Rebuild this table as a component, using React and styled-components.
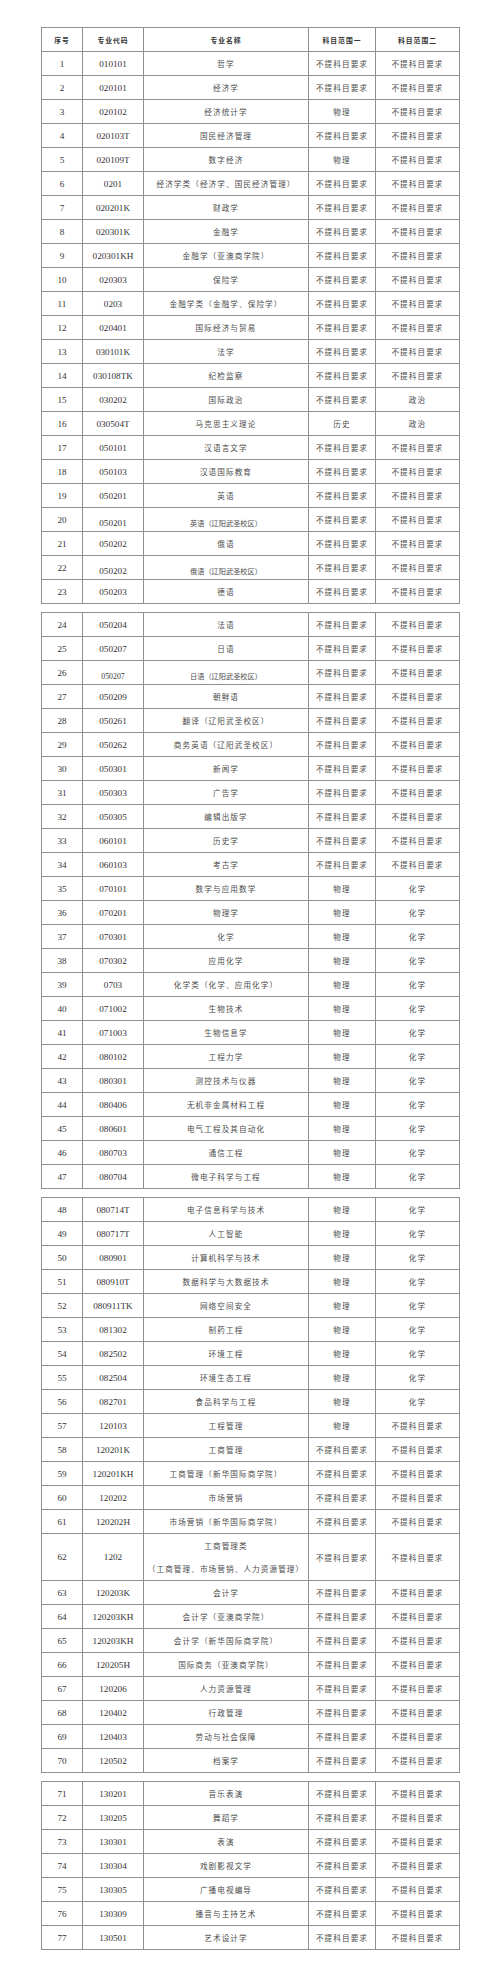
import React from "react";
import styled, { createGlobalStyle } from "styled-components";

const NONE = "不提科目要求";
const PHY = "物理";
const CHEM = "化学";

const Global = createGlobalStyle`
  html, body {
    margin: 0;
    padding: 0;
    background: #ffffff;
  }
  body {
    font-family: "Liberation Serif", "Noto Sans CJK SC", serif;
    color: #3a3a3a;
  }
`;

const Sheet = styled.div`
  width: 500px;
  height: 1976px;
  box-sizing: border-box;
  padding: 27px 0 0 41px;
  display: flex;
  flex-direction: column;
  gap: 8px;
`;

const Section = styled.div`
  width: 419px;
  box-sizing: border-box;
  border: 1px solid #8e8e8e;
  border-bottom: none;
  display: flex;
  flex-direction: column;
`;

const Row = styled.div`
  display: grid;
  grid-template-columns: 41px 61px 165px 67px 1fr;
  height: ${(p) => (p.$tall ? "47px" : "24px")};
  box-sizing: border-box;
  border-bottom: 1px solid #8e8e8e;
`;

const Cell = styled.div`
  display: flex;
  align-items: center;
  justify-content: center;
  text-align: center;
  box-sizing: border-box;
  border-right: 1px solid #8e8e8e;
  padding-top: ${(p) => (p.$low ? "7px" : "0")};
  white-space: nowrap;
  overflow: hidden;
  &:last-child {
    border-right: none;
  }
`;

const HeadCell = styled(Cell)`
  font-family: "Noto Sans CJK SC", sans-serif;
  font-weight: 700;
  font-size: 6.8px;
  letter-spacing: 1px;
  color: #333333;
`;

const NumCell = styled(Cell)`
  font-size: ${(p) => (p.$small ? "7.8px" : "9.2px")};
  color: #333333;
`;

const TextCell = styled(Cell)`
  font-family: "Noto Sans CJK SC", sans-serif;
  font-size: ${(p) => (p.$tight ? "7.2px" : "7.6px")};
  letter-spacing: ${(p) => (p.$tight ? "0" : "1.1px")};
  color: #4c4c4c;
  flex-direction: column;
  line-height: 23px;
`;

// [seq, code, name, subject1, subject2, flags]
const pages = [
  [
    [1, "010101", "哲学", NONE, NONE],
    [2, "020101", "经济学", NONE, NONE],
    [3, "020102", "经济统计学", PHY, NONE],
    [4, "020103T", "国民经济管理", NONE, NONE],
    [5, "020109T", "数字经济", PHY, NONE],
    [6, "0201", "经济学类（经济学、国民经济管理）", NONE, NONE],
    [7, "020201K", "财政学", NONE, NONE],
    [8, "020301K", "金融学", NONE, NONE],
    [9, "020301KH", "金融学（亚澳商学院）", NONE, NONE],
    [10, "020303", "保险学", NONE, NONE],
    [11, "0203", "金融学类（金融学、保险学）", NONE, NONE],
    [12, "020401", "国际经济与贸易", NONE, NONE],
    [13, "030101K", "法学", NONE, NONE],
    [14, "030108TK", "纪检监察", NONE, NONE],
    [15, "030202", "国际政治", NONE, "政治"],
    [16, "030504T", "马克思主义理论", "历史", "政治"],
    [17, "050101", "汉语言文学", NONE, NONE],
    [18, "050103", "汉语国际教育", NONE, NONE],
    [19, "050201", "英语", NONE, NONE],
    [20, "050201", "英语（辽阳武圣校区）", NONE, NONE, { low: true }],
    [21, "050202", "俄语", NONE, NONE],
    [22, "050202", "俄语（辽阳武圣校区）", NONE, NONE, { low: true }],
    [23, "050203", "德语", NONE, NONE],
  ],
  [
    [24, "050204", "法语", NONE, NONE],
    [25, "050207", "日语", NONE, NONE],
    [26, "050207", "日语（辽阳武圣校区）", NONE, NONE, { low: true, small: true }],
    [27, "050209", "朝鲜语", NONE, NONE],
    [28, "050261", "翻译（辽阳武圣校区）", NONE, NONE],
    [29, "050262", "商务英语（辽阳武圣校区）", NONE, NONE],
    [30, "050301", "新闻学", NONE, NONE],
    [31, "050303", "广告学", NONE, NONE],
    [32, "050305", "编辑出版学", NONE, NONE],
    [33, "060101", "历史学", NONE, NONE],
    [34, "060103", "考古学", NONE, NONE],
    [35, "070101", "数学与应用数学", PHY, CHEM],
    [36, "070201", "物理学", PHY, CHEM],
    [37, "070301", "化学", PHY, CHEM],
    [38, "070302", "应用化学", PHY, CHEM],
    [39, "0703", "化学类（化学、应用化学）", PHY, CHEM],
    [40, "071002", "生物技术", PHY, CHEM],
    [41, "071003", "生物信息学", PHY, CHEM],
    [42, "080102", "工程力学", PHY, CHEM],
    [43, "080301", "测控技术与仪器", PHY, CHEM],
    [44, "080406", "无机非金属材料工程", PHY, CHEM],
    [45, "080601", "电气工程及其自动化", PHY, CHEM],
    [46, "080703", "通信工程", PHY, CHEM],
    [47, "080704", "微电子科学与工程", PHY, CHEM],
  ],
  [
    [48, "080714T", "电子信息科学与技术", PHY, CHEM],
    [49, "080717T", "人工智能", PHY, CHEM],
    [50, "080901", "计算机科学与技术", PHY, CHEM],
    [51, "080910T", "数据科学与大数据技术", PHY, CHEM],
    [52, "080911TK", "网络空间安全", PHY, CHEM],
    [53, "081302", "制药工程", PHY, CHEM],
    [54, "082502", "环境工程", PHY, CHEM],
    [55, "082504", "环境生态工程", PHY, CHEM],
    [56, "082701", "食品科学与工程", PHY, CHEM],
    [57, "120103", "工程管理", PHY, NONE],
    [58, "120201K", "工商管理", NONE, NONE],
    [59, "120201KH", "工商管理（新华国际商学院）", NONE, NONE],
    [60, "120202", "市场营销", NONE, NONE],
    [61, "120202H", "市场营销（新华国际商学院）", NONE, NONE],
    [62, "1202", ["工商管理类", "（工商管理、市场营销、人力资源管理）"], NONE, NONE, { tall: true }],
    [63, "120203K", "会计学", NONE, NONE],
    [64, "120203KH", "会计学（亚澳商学院）", NONE, NONE],
    [65, "120203KH", "会计学（新华国际商学院）", NONE, NONE],
    [66, "120205H", "国际商务（亚澳商学院）", NONE, NONE],
    [67, "120206", "人力资源管理", NONE, NONE],
    [68, "120402", "行政管理", NONE, NONE],
    [69, "120403", "劳动与社会保障", NONE, NONE],
    [70, "120502", "档案学", NONE, NONE],
  ],
  [
    [71, "130201", "音乐表演", NONE, NONE],
    [72, "130205", "舞蹈学", NONE, NONE],
    [73, "130301", "表演", NONE, NONE],
    [74, "130304", "戏剧影视文学", NONE, NONE],
    [75, "130305", "广播电视编导", NONE, NONE],
    [76, "130309", "播音与主持艺术", NONE, NONE],
    [77, "130501", "艺术设计学", NONE, NONE],
  ],
];

const DataRow = ({ row }) => {
  const [seq, code, name, s1, s2, flags = {}] = row;
  const lines = Array.isArray(name) ? name : [name];
  return (
    <Row $tall={flags.tall}>
      <NumCell>{seq}</NumCell>
      <NumCell $low={flags.low} $small={flags.small}>
        {code}
      </NumCell>
      <TextCell $low={flags.low} $tight={flags.low}>
        {lines.map((l) => (
          <span key={l}>{l}</span>
        ))}
      </TextCell>
      <TextCell>{s1}</TextCell>
      <TextCell>{s2}</TextCell>
    </Row>
  );
};

const App = () => {
  return (
    <>
      <Global />
      <Sheet>
        {pages.map((rows, i) => (
          <Section key={i}>
            {i === 0 && (
              <Row>
                <HeadCell>序号</HeadCell>
                <HeadCell>专业代码</HeadCell>
                <HeadCell>专业名称</HeadCell>
                <HeadCell>科目范围一</HeadCell>
                <HeadCell>科目范围二</HeadCell>
              </Row>
            )}
            {rows.map((r) => (
              <DataRow key={r[0]} row={r} />
            ))}
          </Section>
        ))}
      </Sheet>
    </>
  );
};

export default App;
